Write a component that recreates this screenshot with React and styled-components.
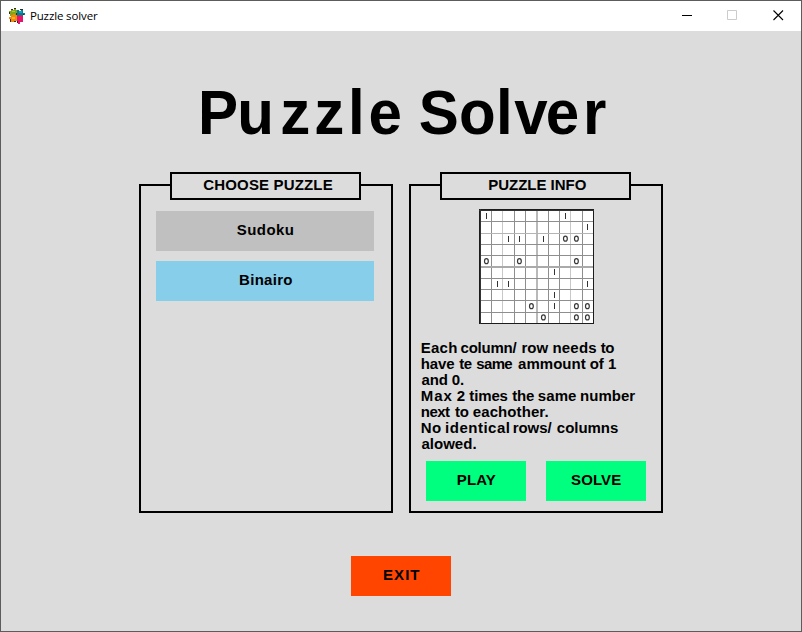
import React from "react";
import styled, { createGlobalStyle } from "styled-components";

const FACE = '"Liberation Sans", Arial, sans-serif';

const Global = createGlobalStyle`
  * { box-sizing: border-box; }
  body { margin: 0; background: #dcdcdc; font-family: ${FACE}; color: #000; }
`;

/* Tracking that makes the drawn part of a string span exactly `width` pixels. */
const ctx = document.createElement("canvas").getContext("2d");
function fit(text, width, size, family = FACE, weight = "bold") {
  /* Measured large, then scaled down, so glyph bounds are not rounded to whole pixels. */
  ctx.font = `${weight} ${size * 20}px ${family}`;
  const m = ctx.measureText(text);
  const ink = (m.actualBoundingBoxLeft + m.actualBoundingBoxRight) / 20;
  return {
    tracking: text.length > 1 ? (width - ink) / (text.length - 1) : 0,
    bearing: -m.actualBoundingBoxLeft / 20,
  };
}

const Window = styled.div`
  width: 802px;
  height: 632px;
  border: 1px solid #5c5c5c;
  background: #dcdcdc;
  display: flex;
  flex-direction: column;
  overflow: hidden;
`;
const TitleBar = styled.header`
  height: 30px;
  flex: none;
  background: #fff;
  display: flex;
  align-items: center;
  padding-left: 7px;
`;
const Caption = styled.div`
  flex: 1;
  margin-left: 5px;
  height: 16px;
  display: flex;
`;
const Controls = styled.div`
  display: flex;
  margin-right: -1px;
`;
const Control = styled.span`
  width: 46px;
  height: 30px;
  padding: 9px 0 0 17px;
  line-height: 0;
`;
const Content = styled.main`
  flex: 1;
  display: flex;
  flex-direction: column;
  align-items: center;
`;
const Heading = styled.h1`
  margin: 45px 0 0 2px;
  width: 409px;
  height: 72px;
  font: bold 63px/72px ${FACE};
  white-space: pre;
  transform: scaleX(0.953);
  transform-origin: left;
`;
const Letter = styled.span`
  letter-spacing: ${(p) => p.$gap / 0.955}px;
`;
const Panels = styled.div`
  display: flex;
  gap: 16px;
  margin-top: 36px;
`;
const Panel = styled.section`
  width: 254px;
  height: 329px;
  border: 2px solid #000;
  display: flex;
  flex-direction: column;
  align-items: center;
`;
const Legend = styled.h2`
  margin: -14px 2px 0 0;
  width: 191px;
  height: 28px;
  flex: none;
  border: 2px solid #000;
  background: #dcdcdc;
  font-size: 15px;
  line-height: 22px;
  display: flex;
`;
const Choices = styled.div`
  display: flex;
  flex-direction: column;
  gap: 10px;
  margin: 11px 2px 0 0;
`;
const Button = styled.button`
  display: flex;
  width: ${(p) => p.$w || 100}px;
  height: 40px;
  padding: 0;
  border: 0;
  background: ${(p) => p.$bg};
  color: #000;
  font: bold 15px/37px ${FACE};
`;
const Tracked = styled.span`
  letter-spacing: ${(p) => p.$tracking}px;
  margin-left: ${(p) => p.$left}px;
  font-family: ${(p) => p.$family || FACE};
  font-size: ${(p) => p.$size}px;
  font-weight: ${(p) => p.$weight || "bold"};
  white-space: nowrap;
`;
const Board = styled.svg`
  flex: none;
  display: block;
  margin: 9px 0 0 1px;
`;
const Info = styled.div`
  align-self: stretch;
  margin: 16px 0 0 10px;
`;
const Line = styled.div`
  display: flex;
  height: 16px;
  font: bold 15px/16px ${FACE};
`;
const Slot = styled.span`
  flex: none;
  width: ${(p) => p.$w}px;
`;
const Actions = styled.div`
  display: flex;
  gap: 20px;
  margin-top: 9px;
`;
const Exit = styled.div`
  margin-top: 43px;
`;

function Label({ text, x, width, size = 15, family, weight }) {
  const f = fit(text, width, size, family, weight);
  return (
    <Tracked $tracking={f.tracking} $left={x - f.bearing} $size={size} $family={family} $weight={weight}>
      {text}
    </Tracked>
  );
}

/* Each word: text, start and end of its ink, in thirds of a pixel from the line's left edge. */
const RULES = [
  [["Each", 2, 107], ["column/", 120, 287], ["row", 304, 382], ["needs", 397, 525], ["to", 539, 579]],
  [["have", 2, 100], ["te", 115, 152], ["same", 167, 274], ["ammount", 292, 494], ["of", 508, 549], ["1", 564, 580]],
  [["and", 2, 78], ["0.", 94, 127]],
  [["Max", 2, 93], ["2", 109, 132], ["times", 145, 259], ["the", 274, 339], ["same", 352, 465], ["number", 480, 642]],
  [["next", 2, 87], ["to", 102, 142], ["eachother.", 157, 380]],
  [["No", 2, 59], ["identical", 75, 264], ["rows/", 278, 392], ["columns", 409, 590]],
  [["alowed.", 2, 164]],
];

function Rule({ words }) {
  return (
    <Line>
      {words.map(([text, from, to], i) => {
        const start = i ? from : 0;
        const next = i + 1 < words.length ? words[i + 1][1] : to + 9;
        return (
          <Slot key={i} $w={(next - start) / 3}>
            <Label text={text} x={(from - start) / 3} width={(to - from) / 3} />
          </Slot>
        );
      })}
    </Line>
  );
}

const TITLE = [
  ["P", -0.8], ["u", 6.3], ["z", 4], ["z", 3.8], ["l", 3.7], ["e", 0.3], [" ", 0],
  ["S", 0], ["o", 0.5], ["l", 1.5], ["v", -1.8], ["e", 3.7], ["r", 0],
];

const CELLS = [
  "1......1..",
  ".........1",
  "..11.1.00.",
  "..........",
  "0..0....0.",
  "......1...",
  ".11......1",
  "......1...",
  "....0.1.00",
  ".....0..00",
];
const XS = [12, 23, 35, 46, 57, 69, 80, 91, 103];
const YS = [12, 24, 35, 46, 57, 69, 80, 91, 103];
const CENTRES = [7, 18, 29, 40, 52, 64, 75, 86, 97, 108];

function BinairoBoard() {
  return (
    <Board width="115" height="115" viewBox="0 0 115 115">
      <rect width="115" height="115" fill="#fff" />
      {XS.map((x, i) => (
        <rect key={x} x={x} y="1" width={i === 4 ? 2 : 1} height="113"
          fill={i === 4 ? "#b9b9b9" : i === 1 || i === 7 ? "#c8c8c8" : "#8e8e8e"} />
      ))}
      {YS.map((y, i) => (
        <rect key={y} x="1" y={y} width="113" height={i === 4 ? 2 : 1}
          fill={i === 4 ? "#aaa" : i === 1 ? "#b4b4b4" : "#8e8e8e"} />
      ))}
      <path d="M0 .5H115M.5 0V115M0 114.5H115M114.5 0V115" stroke="#1c1c1c" />
      <path d="M0 1.5H115M1.5 0V115" stroke="#333" />
      {CELLS.flatMap((row, r) =>
        [...row].map((c, k) => {
          const x = CENTRES[k];
          const cy = 7.2 + r * 11.25;
          if (c === "1")
            return <rect key={`${r}-${k}`} x={x} y={Math.round(cy - 3)} width="1" height="6" fill="#333" />;
          if (c === "0")
            return <ellipse key={`${r}-${k}`} cx={x + 0.4} cy={cy} rx="1.9" ry="2.5" fill="none" stroke="#383838" strokeWidth="1.2" />;
          return null;
        })
      )}
    </Board>
  );
}

function AppIcon() {
  return (
    <svg width="17" height="17" viewBox="0 1 17 17">
      <path d="M3 3H6V1H8V3H9V8H7V7H5V9H2V7H1V4H3Z" fill="#83a51b" />
      <path d="M9 3H11V4H13V2H14V3H15V6H17V8H15V9H13V8H11V9H9Z" fill="#087b8f" />
      <path d="M3 8H5V7H7V8H9V14H6V15H3V12H1V10H3Z" fill="#f18a0c" />
      <path d="M9 9H11V8H13V9H15V15H12V17H10V14H9Z" fill="#e3166c" />
      <path d="M3 2H5V3H3ZM6 1H8V2H6ZM1 5H2V7H1ZM12 2H15V3H12ZM15 7H16V8H15ZM2 12H3V15H2ZM9 14H10V16H9ZM6 14H8V15H6ZM8 6H9V8H8Z" fill="#342a24" />
      <path d="M4 4H7V5H4Z" fill="#b0cb2c" />
      <path d="M11 4H14V6H11Z" fill="#08a2c7" />
      <path d="M4 10H7V12H4Z" fill="#ffb01c" />
    </svg>
  );
}

const UI = '"Open Sans", "Noto Sans", sans-serif';

export default function App() {
  return (
    <Window>
      <Global />
      <TitleBar>
        <AppIcon />
        <Caption>
          <Label text="Puzzle solver" x={1} width={66.5} size={11.5} family={UI} weight="normal" />
        </Caption>
        <Controls>
          <Control>
            <svg width="11" height="11"><path d="M1 5.5H11" stroke="#000" /></svg>
          </Control>
          <Control>
            <svg width="11" height="11"><path d="M.5 .5H9.5V9.5H.5Z" fill="none" stroke="#ccc" /></svg>
          </Control>
          <Control>
            <svg width="11" height="11"><path d="M.5 .5L10 10M10 .5L.5 10" stroke="#000" strokeWidth="1.1" /></svg>
          </Control>
        </Controls>
      </TitleBar>
      <Content>
        <Heading>
          {TITLE.map(([ch, gap], i) => <Letter key={i} $gap={gap}>{ch}</Letter>)}
        </Heading>
        <Panels>
          <Panel>
            <Legend><Label text="CHOOSE PUZZLE" x={32.3} width={128.5} /></Legend>
            <Choices>
              <Button $w={218} $bg="#c0c0c0"><Label text="Sudoku" x={81} width={56} /></Button>
              <Button $w={218} $bg="#87ceeb"><Label text="Binairo" x={84} width={52} /></Button>
            </Choices>
          </Panel>
          <Panel>
            <Legend><Label text="PUZZLE INFO" x={47.7} width={96.7} /></Legend>
            <BinairoBoard />
            <Info>{RULES.map((words, i) => <Rule key={i} words={words} />)}</Info>
            <Actions>
              <Button $bg="#00ff7f"><Label text="PLAY" x={31.7} width={38} /></Button>
              <Button $bg="#00ff7f"><Label text="SOLVE" x={25.3} width={49.5} /></Button>
            </Actions>
          </Panel>
        </Panels>
        <Exit>
          <Button $bg="#ff4500"><Label text="EXIT" x={33} width={35.5} /></Button>
        </Exit>
      </Content>
    </Window>
  );
}
